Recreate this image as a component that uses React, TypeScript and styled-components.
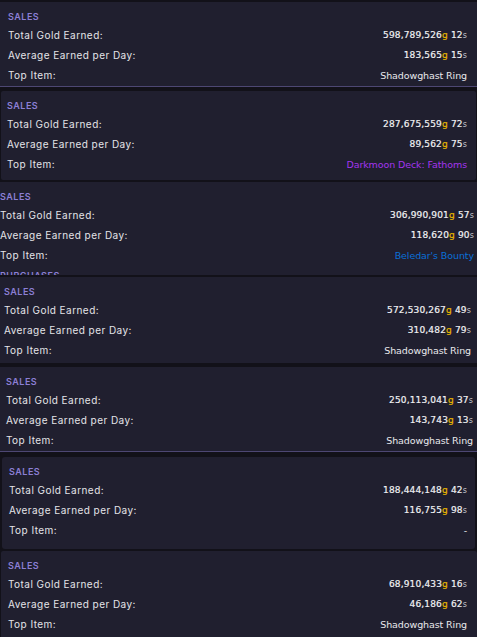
import React from "react";
import styled, { createGlobalStyle } from "styled-components";

const Global = createGlobalStyle`
  html, body { margin: 0; padding: 0; background: #121119; }
  body { width: 477px; height: 637px; overflow: hidden; }
`;

const Page = styled.div`
  display: flex;
  flex-direction: column;
  width: 477px;
  height: 637px;
  overflow: hidden;
  background: #121119;
`;

const Card = styled.section<{
  $mt: number; $ml: number; $mr: number; $pl: number; $pr: number; $h: number; $line?: boolean; $radius?: number;
}>`
  flex: none;
  box-sizing: border-box;
  margin: ${p => p.$mt}px ${p => p.$mr}px 0 ${p => p.$ml}px;
  padding: 10px ${p => p.$pr}px 0 ${p => p.$pl}px;
  height: ${p => p.$h}px;
  background: #201f2f;
  border-bottom: ${p => (p.$line ? "1px solid #4d4773" : "none")};
  border-radius: ${p => p.$radius ?? 0}px;
  overflow: hidden;
  display: flex;
  flex-direction: column;
`;

const Header = styled.div<{ $mt?: number }>`
  flex: none;
  font-family: Inter, "Open Sans", sans-serif;
  font-size: 9px;
  font-weight: 600;
  letter-spacing: 0.5px;
  line-height: 10px;
  height: 10px;
  color: #8c7fd6;
  margin-top: ${p => p.$mt ?? 0}px;
  margin-bottom: 3px;
`;

const Row = styled.div`
  flex: none;
  display: flex;
  justify-content: space-between;
  align-items: center;
  height: 20px;
  font-family: Inter, "Open Sans", sans-serif;
  font-size: 10px;
  letter-spacing: 0.45px;
  color: #e4e4e8;
`;

const Value = styled.span<{ $color?: string }>`
  font-family: "DejaVu Sans", "Liberation Sans", sans-serif;
  font-size: 9.5px;
  letter-spacing: -0.1px;
  color: ${p => p.$color ?? "#e8e8ec"};
`;

const Money = styled.span`
  font-family: "DejaVu Sans", "Liberation Sans", sans-serif;
  font-size: 9px;
  letter-spacing: 0.15px;
  color: #f2f2f4;
  -webkit-text-stroke: 0.2px #f2f2f4;
`;

const Gold = styled.span`
  color: #e8b600;
  -webkit-text-stroke: 0.2px #e8b600;
`;

const Silver = styled.span`
  font-size: 8px;
  color: #c4c4cc;
  -webkit-text-stroke: 0;
`;

type Data = {
  total: [string, string];
  avg: [string, string];
  item: string;
  color?: string;
};

const cards: Array<Data & { mt: number; ml: number; mr: number; pl: number; pr: number; h: number; line?: boolean; radius?: number; peek?: boolean }> = [
  { total: ["598,789,526", "12"], avg: ["183,565", "15"], item: "Shadowghast Ring", mt: 2, ml: 0, mr: 0, pl: 8, pr: 10, h: 85, line: true },
  { total: ["287,675,559", "72"], avg: ["89,562", "75"], item: "Darkmoon Deck: Fathoms", color: "#a335ee", mt: 4, ml: 1, mr: 1, pl: 6, pr: 9, h: 89, radius: 2 },
  { total: ["306,990,901", "57"], avg: ["118,620", "90"], item: "Beledar's Bounty", color: "#0a6fd8", mt: 2, ml: 0, mr: 0, pl: 0, pr: 3, h: 93, peek: true },
  { total: ["572,530,267", "49"], avg: ["310,482", "79"], item: "Shadowghast Ring", mt: 2, ml: 0, mr: 0, pl: 4, pr: 6, h: 86 },
  { total: ["250,113,041", "37"], avg: ["143,743", "13"], item: "Shadowghast Ring", mt: 4, ml: 0, mr: 0, pl: 6, pr: 4, h: 85, line: true },
  { total: ["188,444,148", "42"], avg: ["116,755", "98"], item: "-", mt: 5, ml: 2, mr: 2, pl: 7, pr: 8, h: 92, radius: 3 },
  { total: ["68,910,433", "16"], avg: ["46,186", "62"], item: "Shadowghast Ring", mt: 2, ml: 1, mr: 0, pl: 7, pr: 10, h: 100, radius: 2 },
];

const Amount = ({ v }: { v: [string, string] }) => (
  <Money>
    {v[0]}
    <Gold>g</Gold> {v[1]}
    <Silver>s</Silver>
  </Money>
);

export default function App() {
  return (
    <>
      <Global />
      <Page>
        {cards.map((c, i) => (
          <Card key={i} $mt={c.mt} $ml={c.ml} $mr={c.mr} $pl={c.pl} $pr={c.pr} $h={c.h} $line={c.line} $radius={c.radius}>
            <Header>SALES</Header>
            <Row>
              <span>Total Gold Earned:</span>
              <Amount v={c.total} />
            </Row>
            <Row>
              <span>Average Earned per Day:</span>
              <Amount v={c.avg} />
            </Row>
            <Row>
              <span>Top Item:</span>
              <Value $color={c.color}>{c.item}</Value>
            </Row>
            {c.peek && <Header $mt={6}>PURCHASES</Header>}
          </Card>
        ))}
      </Page>
    </>
  );
}
